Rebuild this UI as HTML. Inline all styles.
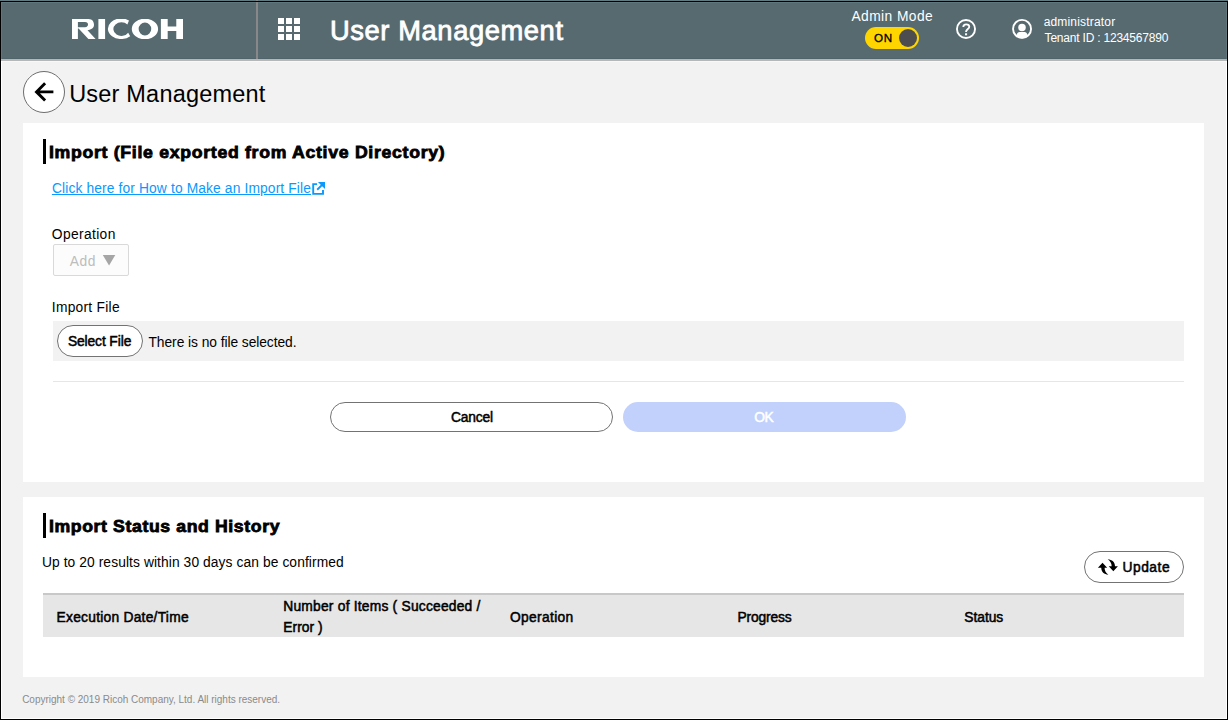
<!DOCTYPE html>
<html lang="en">
<head>
<meta charset="utf-8">
<title>User Management</title>
<style>
html,body{margin:0;padding:0;}
body{width:1228px;height:720px;position:relative;overflow:hidden;background:#f2f2f2;font-family:"Liberation Sans",sans-serif;color:#000;}
.a{position:absolute;}
.t{position:absolute;white-space:nowrap;line-height:1;margin:0;padding:0;}
.sb{-webkit-text-stroke:0.5px currentColor;}
.blk{font-weight:bold;-webkit-text-stroke:0.8px #000;transform:scaleX(1.07);transform-origin:0 0;}
/* header */
#hdr{left:0;top:0;width:1228px;height:59px;background:#566a70;}
#hdrdark{left:0;top:58px;width:1228px;height:1px;background:#50656b;}
#hdrlight{left:0;top:61px;width:1228px;height:1px;background:#f8f8f8;}
#hdrline{left:0;top:59px;width:1228px;height:2px;background:#b7b7b7;}
#vdiv{z-index:2;left:256px;top:0px;width:2px;height:59px;background:#888888;}
/* panels */
#p1{left:23px;top:123px;width:1181px;height:359px;background:#fff;}
#p2{left:23px;top:497px;width:1181px;height:180px;background:#fff;}
.bar{width:3px;background:#000;}
/* frame */
#f-top0{left:0;top:0;width:1228px;height:1px;background:#627a81;}
#f-top{z-index:3;left:0;top:1px;width:1228px;height:1px;background:#000;}
#f-left{left:0;top:1px;width:1px;height:719px;background:#000;}
#f-right{left:1227px;top:1px;width:1px;height:719px;background:#000;}
#f-bot{left:0;top:719px;width:1228px;height:1px;background:#000;}
#h-left{left:1px;top:61px;width:1px;height:658px;background:#fff;}
#h-right{left:1226px;top:61px;width:1px;height:658px;background:#fff;}
#h-bot{left:1px;top:718px;width:1226px;height:1px;background:#fff;}
#h-top{left:1px;top:2px;width:1226px;height:1px;background:#5f777d;}
#h-hl{left:1px;top:3px;width:1px;height:56px;background:#5f777d;}
#h-hr{left:1226px;top:3px;width:1px;height:56px;background:#5f777d;}
</style>
</head>
<body>

<!-- ===== header ===== -->
<div class="a" id="hdr"></div>
<div class="a" id="hdrdark"></div>
<div class="a" id="hdrline"></div>
<div class="a" id="hdrlight"></div>
<div class="a" id="vdiv"></div>

<!-- RICOH logo -->
<svg class="a" id="logo" style="left:72px;top:19px;width:111.2px;height:20px" viewBox="0 0 111.2 20">
  <g fill="#fff">
    <path fill-rule="evenodd" d="M0,0 H16.5 C20.5,0 22,2.8 22,5.8 C22,9 19.5,10.8 15.5,11.2 L23.6,20 H16.4 L6.6,9.4 H5.9 V20 H0 Z M5.9,3.1 H13 C15.2,3.1 16,4.3 16,5.6 C16,7 15.2,8.2 13,8.2 H5.9 Z"/>
    <rect x="26.4" y="0" width="6.7" height="20"/>
    <path d="M57.0,1.5 A13.2,10.3 0 1 0 58.2,17.2 L56.2,13.7 A8,6.8 0 1 1 55.4,5.6 Z"/>
    <path fill-rule="evenodd" d="M72.95,-0.3 A13.15,10.3 0 1 0 72.95,20.3 A13.15,10.3 0 1 0 72.95,-0.3 Z M72.95,3.6 A6.3,6.4 0 1 1 72.95,16.4 A6.3,6.4 0 1 1 72.95,3.6 Z"/>
    <path d="M88.9,0 H95.7 V7.6 H104.3 V0 H111.1 V20 H104.3 V12 H95.7 V20 H88.9 Z"/>
  </g>
</svg>

<!-- grid icon -->
<svg class="a" id="grid" style="left:278px;top:18px;width:22px;height:22px" viewBox="0 0 22 22">
  <g fill="#fff">
    <rect x="0" y="0" width="6" height="6"/><rect x="8" y="0" width="6" height="6"/><rect x="16" y="0" width="6" height="6"/>
    <rect x="0" y="8" width="6" height="6"/><rect x="8" y="8" width="6" height="6"/><rect x="16" y="8" width="6" height="6"/>
    <rect x="0" y="16" width="6" height="6"/><rect x="8" y="16" width="6" height="6"/><rect x="16" y="16" width="6" height="6"/>
  </g>
</svg>


<!-- header title -->
<div class="t" id="t-htitle" style="left:330.02px;top:17px;font-size:27.3px;color:#fff;-webkit-text-stroke:0.8px #fff;letter-spacing:0.6px">User Management</div>

<!-- admin mode -->
<div class="t" id="t-admin" style="left:851.5px;top:10px;font-size:13.8px;color:#fff;letter-spacing:0.41px">Admin Mode</div>
<div class="a" id="tog" style="left:865px;top:27px;width:54px;height:22px;border-radius:11px;background:#ffd500"></div>
<div class="a" id="knob" style="left:899px;top:29px;width:18px;height:18px;border-radius:9px;background:#4d4d4f"></div>
<div class="t sb" id="t-on" style="-webkit-text-stroke-width:0.3px;left:874.02px;top:32px;font-size:11.6px;color:#000;letter-spacing:0.74px">ON</div>

<!-- help icon -->
<svg class="a" id="help" style="left:955px;top:18px;width:22px;height:22px" viewBox="0 0 22 22">
  <circle cx="11" cy="11" r="9.05" fill="none" stroke="#fff" stroke-width="1.9"/>
  <path d="M8.3,8.9 C8.3,7 9.5,6.3 11.2,6.3 C13,6.3 14.3,7.3 14.3,8.8 C14.3,11 11,11.2 11,14" fill="none" stroke="#fff" stroke-width="1.8"/>
  <rect x="10" y="15.3" width="2.1" height="2" fill="#fff"/>
</svg>

<!-- user icon -->
<svg class="a" id="user" style="left:1011px;top:18px;width:22px;height:22px" viewBox="0 0 22 22">
  <defs><clipPath id="uc"><circle cx="11.05" cy="10.9" r="9.5"/></clipPath></defs>
  <circle cx="11.05" cy="10.9" r="9" fill="none" stroke="#fff" stroke-width="1.9"/>
  <circle cx="11" cy="9.5" r="3.75" fill="#fff"/>
  <path d="M8.6,14.1 H13.5 C15,14.1 16,15.2 16.6,17 L17.6,22 H4.5 L5.5,17 C6.1,15.2 7.1,14.1 8.6,14.1 Z" fill="#fff" clip-path="url(#uc)"/>
</svg>
<div class="t" id="t-uname" style="left:1043.63px;top:16px;font-size:12px;color:#fff;letter-spacing:0.18px">administrator</div>
<div class="t" id="t-tenant" style="left:1044.62px;top:32px;font-size:12px;color:#fff;letter-spacing:-0.21px">Tenant ID : 1234567890</div>

<!-- ===== panels ===== -->
<div class="a" id="p1"></div>
<div class="a" id="p2"></div>


<!-- ===== page title row ===== -->
<div class="a" id="backbtn" style="left:23px;top:71px;width:40px;height:40px;border:1px solid #6e6e6e;border-radius:21px;background:#fff"></div>
<svg class="a" id="backarrow" style="left:33px;top:81px;width:22px;height:22px" viewBox="0 0 22 22">
  <path d="M20.4,10.9 H4 M12.1,2.3 L3.5,10.9 L12.1,19.5" fill="none" stroke="#000" stroke-width="2.9" stroke-linejoin="miter"/>
</svg>
<div class="t" id="t-ptitle" style="left:69.19px;top:83px;font-size:23.5px;color:#000;letter-spacing:0.2px">User Management</div>

<!-- ===== panel 1 content ===== -->
<div class="a bar" id="bar1" style="left:43px;top:139px;height:25px"></div>
<div class="t blk" id="t-h1" style="left:48.95px;top:144px;font-size:16.5px;letter-spacing:0.66px">Import (File exported from Active Directory)</div>

<div class="t" id="t-link" style="left:51.92px;top:182px;font-size:13.8px;color:#0a99fc;text-decoration:underline;text-underline-offset:1px;letter-spacing:0.13px">Click here for How to Make an Import File</div>
<svg class="a" id="ext" style="left:312px;top:182px;width:13px;height:13px;overflow:visible" viewBox="0 0 13 13">
  <path d="M5.1,2.1 H1.2 V11.9 H11 V8" fill="none" stroke="#0a99fc" stroke-width="1.9"/>
  <path d="M5.9,0 H13 V7.1 Z" fill="#0a99fc"/>
  <path d="M10.6,2.4 L5.2,7.8" fill="none" stroke="#0a99fc" stroke-width="2"/>
</svg>

<div class="t" id="t-op" style="left:51.86px;top:228px;font-size:13.8px;letter-spacing:0.36px">Operation</div>
<div class="a" id="sel" style="left:53px;top:244px;width:74px;height:30px;border:1px solid #d9d9d9;border-radius:2px;background:#fcfcfc"></div>
<div class="t" id="t-add" style="left:69.84px;top:255px;font-size:13.8px;color:#bdbdbd;letter-spacing:0.5px">Add</div>
<svg class="a" id="tri" style="left:102px;top:254px;width:14px;height:12px" viewBox="0 0 14 12">
  <path d="M0.8,0.9 H13.3 L7.05,11.6 Z" fill="#a6a6a6"/>
</svg>

<div class="t" id="t-if" style="left:51.81px;top:301px;font-size:13.8px;letter-spacing:0.26px">Import File</div>
<div class="a" id="filebar" style="left:53px;top:321px;width:1131px;height:40px;background:#f2f2f2"></div>
<div class="a" id="selbtn" style="left:57px;top:325px;width:83.5px;height:30px;border:1px solid #737373;border-radius:16px;background:#fff"></div>
<div class="t sb" id="t-selfile" style="left:67.9px;top:335px;font-size:13.8px;letter-spacing:-0.1px">Select File</div>
<div class="t" id="t-nofile" style="left:148.5px;top:336px;font-size:13.8px;letter-spacing:-0.06px">There is no file selected.</div>

<div class="a" id="hr1" style="left:53px;top:381px;width:1131px;height:1px;background:#e6e6e6"></div>

<div class="a" id="cancel" style="left:330px;top:402px;width:281px;height:28px;border:1px solid #737373;border-radius:15px;background:#fff"></div>
<div class="t sb" id="t-cancel" style="left:450.89px;top:411px;font-size:13.8px;letter-spacing:-0.15px">Cancel</div>
<div class="a" id="ok" style="left:623px;top:402px;width:283px;height:30px;border-radius:15px;background:#c2d1fb"></div>
<div class="t sb" id="t-ok" style="left:754.19px;top:411px;font-size:13.8px;color:#fff;letter-spacing:-0.35px">OK</div>


<!-- ===== panel 2 content ===== -->
<div class="a bar" id="bar2" style="left:43px;top:513px;height:25px"></div>
<div class="t blk" id="t-h2" style="left:48.8px;top:518px;font-size:16.5px;letter-spacing:0.57px">Import Status and History</div>
<div class="t" id="t-note" style="left:41.9px;top:556px;font-size:13.8px;letter-spacing:0.09px">Up to 20 results within 30 days can be confirmed</div>

<div class="a" id="upd" style="left:1084px;top:551px;width:98px;height:30px;border:1px solid #737373;border-radius:16px;background:#fff"></div>
<svg class="a" id="updicon" style="left:1090px;top:552px;width:40px;height:30px" viewBox="0 0 960 720">
  <path d="M300,255 L412,380 H350 C350,450 380,510 440,545 C340,540 270,480 270,380 H190 Z" fill="#000"/>
  <path d="M425,175 C530,180 600,250 600,340 H670 L560,460 L450,340 H520 C520,270 480,210 425,175 Z" fill="#000"/>
</svg>
<div class="t sb" id="t-upd" style="left:1122.5px;top:561px;font-size:13.8px;letter-spacing:0.52px">Update</div>

<div class="a" id="thtop" style="left:43px;top:593px;width:1141px;height:2px;background:#c8c8c8"></div>
<div class="a" id="th" style="left:43px;top:595px;width:1141px;height:42px;background:#e6e6e6"></div>
<div class="t sb" id="t-c1" style="left:56.54px;top:611px;font-size:13.8px;letter-spacing:0.25px">Execution Date/Time</div>
<div class="t sb" id="t-c2a" style="left:283.3px;top:600px;font-size:13.8px;letter-spacing:0.22px">Number of Items ( Succeeded /</div>
<div class="t sb" id="t-c2b" style="left:283.3px;top:621px;font-size:13.8px;letter-spacing:0.04px">Error )</div>
<div class="t sb" id="t-c3" style="left:510.07px;top:611px;font-size:13.8px;letter-spacing:0.32px">Operation</div>
<div class="t sb" id="t-c4" style="left:737.46px;top:611px;font-size:13.8px;letter-spacing:-0.15px">Progress</div>
<div class="t sb" id="t-c5" style="left:964.21px;top:611px;font-size:13.8px;letter-spacing:-0.01px">Status</div>

<!-- ===== footer ===== -->
<div class="t" id="t-foot" style="left:22.16px;top:695px;font-size:10px;color:#8a8a8a;letter-spacing:-0.01px">Copyright © 2019 Ricoh Company, Ltd. All rights reserved.</div>

<!-- ===== frame (screenshot border) ===== -->
<div class="a" id="h-top"></div><div class="a" id="h-hl"></div><div class="a" id="h-hr"></div>
<div class="a" id="h-left"></div><div class="a" id="h-right"></div><div class="a" id="h-bot"></div>
<div class="a" id="f-top0"></div><div class="a" id="f-top"></div>
<div class="a" id="f-left"></div><div class="a" id="f-right"></div><div class="a" id="f-bot"></div>

</body>
</html>
